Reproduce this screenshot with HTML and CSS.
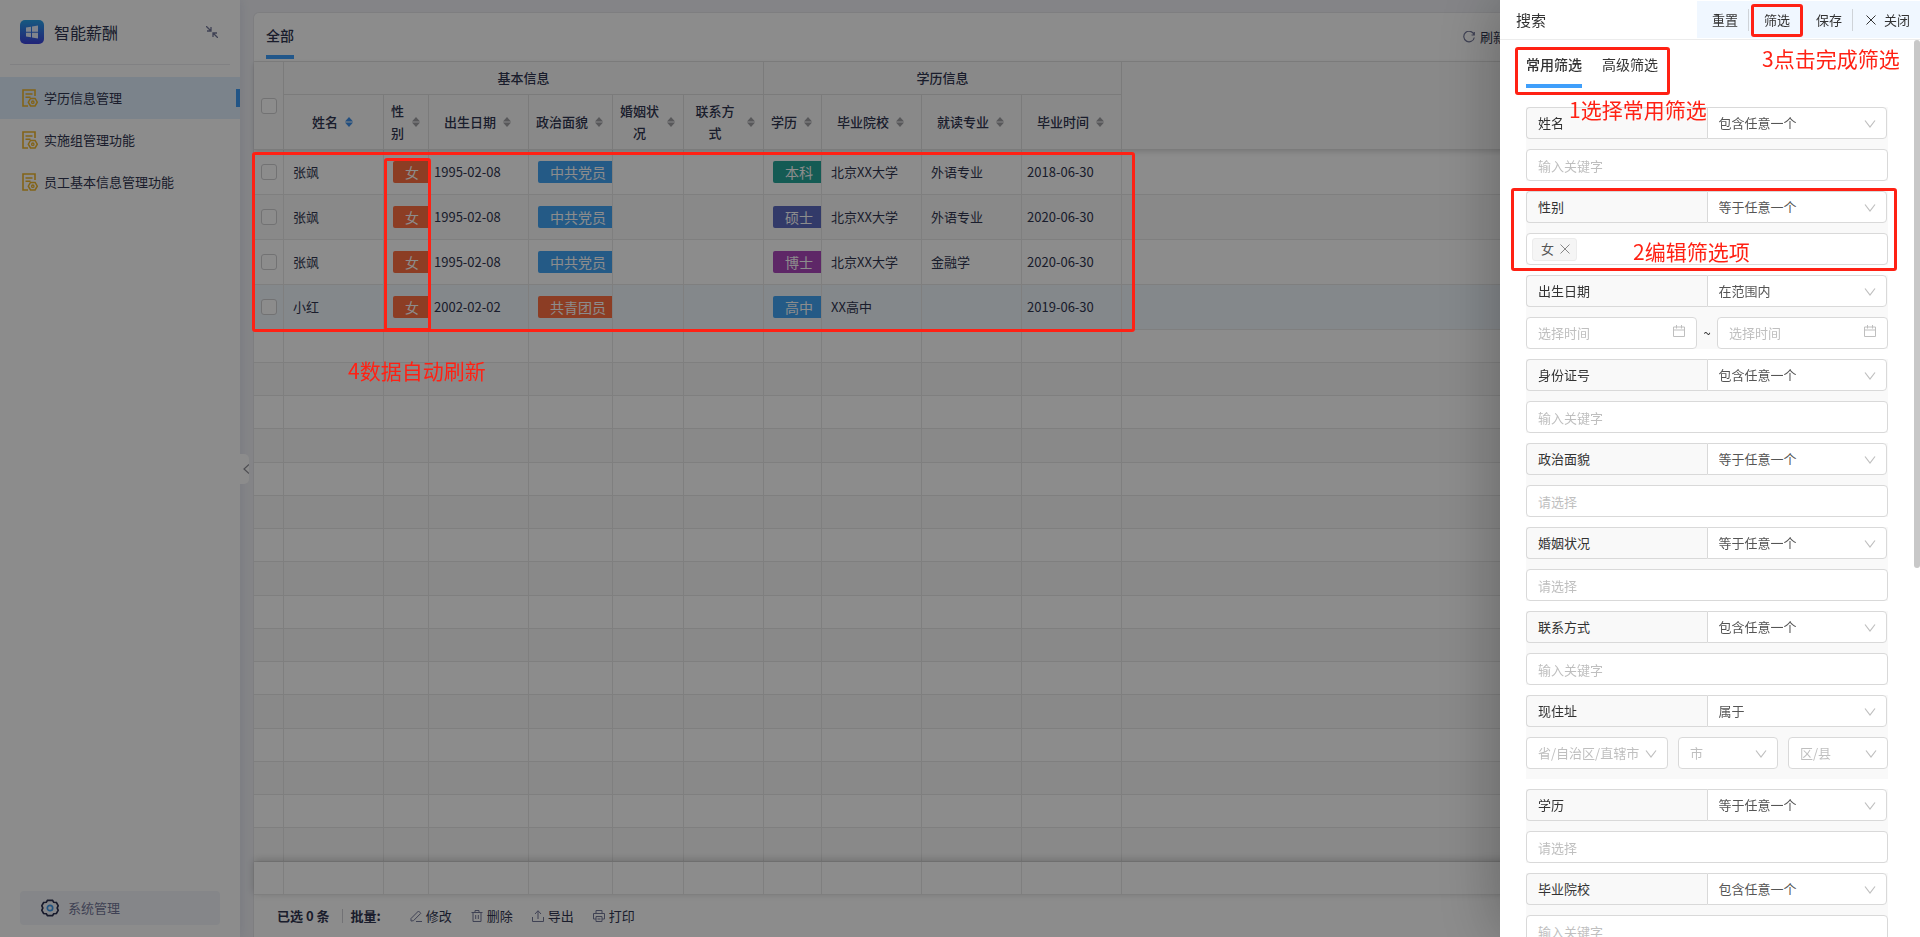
FILE: index.html
```html
<!DOCTYPE html>
<html lang="zh-CN">
<head>
<meta charset="utf-8">
<title>智能薪酬</title>
<link rel="stylesheet" href="styles.css">
</head>
<body>
<svg class="sprite" aria-hidden="true">
  <symbol id="i-doc" viewBox="0 0 16 18"><path d="M13 7V1H1v16h5M3.500 5h7M3.500 8.200h5" fill="none" stroke="currentColor" stroke-width="1.600"/><path d="M8.500 9.400h4.600l2.200 3.800-2.200 3.800H8.500l-2.200-3.800z" fill="none" stroke="currentColor" stroke-width="1.500"/><circle cx="10.800" cy="13.200" r="1.200" fill="none" stroke="currentColor" stroke-width="1.300"/></symbol>
  <symbol id="i-sort" viewBox="0 0 8 10"><path class="up" d="M4 0l4 4.500H0z"/><path class="down" d="M4 10l4-4.500H0z"/></symbol>
  <symbol id="i-down" viewBox="0 0 12 8"><path d="M1 .5l5 6.500 5-6.500" fill="none" stroke="currentColor" stroke-width="1.200"/></symbol>
  <symbol id="i-close" viewBox="0 0 10 10"><path d="M.5.5l9 9m0-9l-9 9" fill="none" stroke="currentColor" stroke-width="1"/></symbol>
  <symbol id="i-cal" viewBox="0 0 12 12"><path d="M.5 2h11v9.500H.5zM.5 5h11M3.500 0v3.500M8.500 0v3.500" fill="none" stroke="currentColor"/></symbol>
</svg>

<div class="app">
  <aside class="sidebar">
    <header class="brand">
      <svg class="logo" viewBox="0 0 24 24"><defs><linearGradient id="lg" x1="0" y1="0" x2="0" y2="1"><stop offset="0" stop-color="#29a3ea"/><stop offset="1" stop-color="#3d42dc"/></linearGradient></defs><rect width="24" height="24" rx="5" fill="url(#lg)"/><path d="M6 7.600l5-.8v4.900H6zM12 6.600l6-1v6.100h-6zM6 12.700h5v4.600l-5-.8zM12 12.700h6v5.800l-6-1z" fill="#e8f1ff"/></svg>
      <h1>智能薪酬</h1>
      <button class="collapse" aria-label="收起"><svg viewBox="0 0 12 12"><path d="M0 0l4.500 4.500M5 1v4H1M12 12L7.500 7.500M11 7H7v4" fill="none" stroke="currentColor" stroke-width="1.300"/></svg></button>
    </header>
    <nav class="menu">
      <a class="active" href="#"><svg><use href="#i-doc"/></svg>学历信息管理</a>
      <a href="#"><svg><use href="#i-doc"/></svg>实施组管理功能</a>
      <a href="#"><svg><use href="#i-doc"/></svg>员工基本信息管理功能</a>
    </nav>
    <button class="system">
      <svg viewBox="0 0 18 18"><path d="M6.500 1.300h5l1.200 2 2.700.2 1.800 3.200-1 2.300 1 2.300-1.800 3.200-2.700.2-1.200 2h-5l-1.200-2-2.700-.2L.8 11.300l1-2.300-1-2.300 1.800-3.200 2.700-.2z" fill="none" stroke="#2b3050" stroke-width="1.700"/><circle cx="9" cy="9" r="2.700" fill="none" stroke="#3f9bef" stroke-width="1.700"/></svg>
      系统管理
    </button>
    <button class="handle" aria-label="折叠侧栏"><svg viewBox="0 0 6 10"><path d="M6 .5L1 5l5 4.500" fill="none" stroke="currentColor" stroke-width="1.200"/></svg></button>
  </aside>

  <main class="card">
    <header class="card-head">
      <button class="tab on">全部</button>
      <button class="refresh"><svg viewBox="0 0 12 12"><path d="M11 3.500A5.300 5.300 0 1 0 11.300 6.500M11.300 1v3H8.500" fill="none" stroke="currentColor" stroke-width="1.200"/></svg>刷新</button>
    </header>

    <table class="grid">
      <colgroup><col class="w-check"><col class="w-100"><col class="w-sex"><col class="w-100"><col class="w-party"><col class="w-marry"><col class="w-phone"><col class="w-edu"><col class="w-100"><col class="w-100"><col class="w-100"><col></colgroup>
      <thead>
        <tr class="groups"><th rowspan="2"><input type="checkbox" aria-label="全选"></th><th colspan="6">基本信息</th><th colspan="4">学历信息</th><th rowspan="2" class="rest"></th></tr>
        <tr class="names">
          <th><div><span>姓名</span><svg class="sort desc"><use href="#i-sort"/></svg></div></th>
          <th><div><span>性别</span><svg class="sort"><use href="#i-sort"/></svg></div></th>
          <th><div><span>出生日期</span><svg class="sort"><use href="#i-sort"/></svg></div></th>
          <th><div><span>政治面貌</span><svg class="sort"><use href="#i-sort"/></svg></div></th>
          <th><div><span>婚姻状况</span><svg class="sort"><use href="#i-sort"/></svg></div></th>
          <th><div><span>联系方式</span><svg class="sort"><use href="#i-sort"/></svg></div></th>
          <th><div><span>学历</span><svg class="sort"><use href="#i-sort"/></svg></div></th>
          <th><div><span>毕业院校</span><svg class="sort"><use href="#i-sort"/></svg></div></th>
          <th><div><span>就读专业</span><svg class="sort"><use href="#i-sort"/></svg></div></th>
          <th><div><span>毕业时间</span><svg class="sort"><use href="#i-sort"/></svg></div></th>
        </tr>
      </thead>
      <tbody class="data">
        <tr><td class="check"><input type="checkbox" aria-label="选择"></td><td>张飒</td><td><span class="tag orange">女</span></td><td class="date">1995-02-08</td><td><span class="tag blue">中共党员</span></td><td></td><td></td><td><span class="tag teal">本科</span></td><td>北京XX大学</td><td>外语专业</td><td class="date">2018-06-30</td><td></td></tr>
        <tr><td class="check"><input type="checkbox" aria-label="选择"></td><td>张飒</td><td><span class="tag orange">女</span></td><td class="date">1995-02-08</td><td><span class="tag blue">中共党员</span></td><td></td><td></td><td><span class="tag indigo">硕士</span></td><td>北京XX大学</td><td>外语专业</td><td class="date">2020-06-30</td><td></td></tr>
        <tr><td class="check"><input type="checkbox" aria-label="选择"></td><td>张飒</td><td><span class="tag orange">女</span></td><td class="date">1995-02-08</td><td><span class="tag blue">中共党员</span></td><td></td><td></td><td><span class="tag purple">博士</span></td><td>北京XX大学</td><td>金融学</td><td class="date">2020-06-30</td><td></td></tr>
        <tr class="hover"><td class="check"><input type="checkbox" aria-label="选择"></td><td>小红</td><td><span class="tag orange">女</span></td><td class="date">2002-02-02</td><td><span class="tag orange">共青团员</span></td><td></td><td></td><td><span class="tag blue">高中</span></td><td>XX高中</td><td></td><td class="date">2019-06-30</td><td></td></tr>
      </tbody>
      <tbody class="filler" id="filler"></tbody>
      <tfoot><tr><td></td><td></td><td></td><td></td><td></td><td></td><td></td><td></td><td></td><td></td><td></td><td></td></tr></tfoot>
    </table>

    <footer class="bulk">
      <strong class="count">已选 0 条</strong>
      <strong class="label">批量:</strong>
      <button><svg viewBox="0 0 12 12"><path d="M1 8.500L8.500 1l2.300 2.300L3.500 10.700 1 11zM6 11.500h6" fill="none" stroke="currentColor"/></svg>修改</button>
      <button><svg viewBox="0 0 12 12"><path d="M.5 2.500h11M4 2.500v-2h4v2M2 2.500v9h8v-9M4.700 5v4M7.300 5v4" fill="none" stroke="currentColor"/></svg>删除</button>
      <button><svg viewBox="0 0 12 12"><path d="M6 9V1M3 4l3-3.300L9 4M.5 7v4.500h11V7" fill="none" stroke="currentColor"/></svg>导出</button>
      <button><svg viewBox="0 0 12 12"><path d="M3 3.500v-3h6v3M3 9H.5V3.500h11V9H9M3 6.500h6v5H3zM4.500 9h3" fill="none" stroke="currentColor"/></svg>打印</button>
    </footer>
  </main>
</div>

<div class="mask"></div>

<section class="drawer" aria-label="搜索">
  <header class="drawer-head">
    <h2>搜索</h2>
    <div class="actions">
      <button class="reset">重置</button><i></i><button class="apply">筛选</button><button class="save">保存</button><i></i><button class="close"><svg><use href="#i-close"/></svg>关闭</button>
    </div>
  </header>
  <div class="drawer-body">
    <div class="tabs"><button class="tab on">常用筛选</button><button class="tab">高级筛选</button></div>
    <form class="fields">
      <div class="field">
        <div class="cond"><label for="f1">姓名</label><div class="pick"><select aria-label="姓名条件"><option>包含任意一个</option></select><svg><use href="#i-down"/></svg></div></div>
        <input id="f1" class="box" placeholder="输入关键字">
      </div>
      <div class="field">
        <div class="cond"><label for="f2">性别</label><div class="pick"><select aria-label="性别条件"><option>等于任意一个</option></select><svg><use href="#i-down"/></svg></div></div>
        <div class="box chips"><span class="chip">女<button type="button" aria-label="移除"><svg><use href="#i-close"/></svg></button></span><input id="f2"></div>
      </div>
      <div class="field">
        <div class="cond"><label for="f3">出生日期</label><div class="pick"><select aria-label="出生日期条件"><option>在范围内</option></select><svg><use href="#i-down"/></svg></div></div>
        <div class="range"><div class="pick cal"><input id="f3" class="box" placeholder="选择时间"><svg><use href="#i-cal"/></svg></div><span>~</span><div class="pick cal"><input class="box" aria-label="结束时间" placeholder="选择时间"><svg><use href="#i-cal"/></svg></div></div>
      </div>
      <div class="field">
        <div class="cond"><label for="f4">身份证号</label><div class="pick"><select aria-label="身份证号条件"><option>包含任意一个</option></select><svg><use href="#i-down"/></svg></div></div>
        <input id="f4" class="box" placeholder="输入关键字">
      </div>
      <div class="field">
        <div class="cond"><label for="f5">政治面貌</label><div class="pick"><select aria-label="政治面貌条件"><option>等于任意一个</option></select><svg><use href="#i-down"/></svg></div></div>
        <input id="f5" class="box" placeholder="请选择">
      </div>
      <div class="field">
        <div class="cond"><label for="f6">婚姻状况</label><div class="pick"><select aria-label="婚姻状况条件"><option>等于任意一个</option></select><svg><use href="#i-down"/></svg></div></div>
        <input id="f6" class="box" placeholder="请选择">
      </div>
      <div class="field">
        <div class="cond"><label for="f7">联系方式</label><div class="pick"><select aria-label="联系方式条件"><option>包含任意一个</option></select><svg><use href="#i-down"/></svg></div></div>
        <input id="f7" class="box" placeholder="输入关键字">
      </div>
      <div class="field address">
        <div class="cond"><label for="f8">现住址</label><div class="pick"><select aria-label="现住址条件"><option>属于</option></select><svg><use href="#i-down"/></svg></div></div>
        <div class="places">
          <div class="pick"><select id="f8" class="box"><option>省/自治区/直辖市</option></select><svg><use href="#i-down"/></svg></div>
          <div class="pick"><select class="box" aria-label="市"><option>市</option></select><svg><use href="#i-down"/></svg></div>
          <div class="pick"><select class="box" aria-label="区县"><option>区/县</option></select><svg><use href="#i-down"/></svg></div>
        </div>
      </div>
      <div class="field">
        <div class="cond"><label for="f9">学历</label><div class="pick"><select aria-label="学历条件"><option>等于任意一个</option></select><svg><use href="#i-down"/></svg></div></div>
        <input id="f9" class="box" placeholder="请选择">
      </div>
      <div class="field">
        <div class="cond"><label for="f10">毕业院校</label><div class="pick"><select aria-label="毕业院校条件"><option>包含任意一个</option></select><svg><use href="#i-down"/></svg></div></div>
        <input id="f10" class="box" placeholder="输入关键字">
      </div>
    </form>
  </div>
  <div class="thumb"></div>
</section>

<div class="notes left">
  <div class="frame rows"></div>
  <div class="frame sex"></div>
  <p class="note n4">4数据自动刷新</p>
</div>
<div class="notes right">
  <div class="frame apply-frame"></div>
  <div class="frame tabs-frame"></div>
  <div class="frame sex-frame"></div>
  <p class="note n1">1选择常用筛选</p>
  <p class="note n2">2编辑筛选项</p>
  <p class="note n3">3点击完成筛选</p>
</div>
<script src="script.js"></script>
</body>
</html>
```
FILE: script.js
```js
// Empty rows keep the grid lines running down to the summary row.
const filler = document.getElementById('filler');
for (let r = 0; r < 16; r++) {
  const row = filler.insertRow();
  for (let c = 0; c < 12; c++) row.insertCell();
}
```
FILE: styles.css
```css
* { box-sizing: border-box; }
body {
  margin: 0;
  height: 100vh;
  overflow: hidden;
  background: #f0f1f6;
  color: #303550;
  font: 13px/20px "Noto Sans CJK SC", "Noto Sans", sans-serif;
}
button {
  border: 0;
  padding: 0;
  background: none;
  color: inherit;
  font: inherit;
  white-space: nowrap;
}
a { color: inherit; text-decoration: none; }
h1, h2, p { margin: 0; font-weight: 400; }
.sprite { position: absolute; width: 0; height: 0; }

.app { display: flex; height: 100vh; isolation: isolate; }

/* Sidebar */
.sidebar {
  position: relative;
  flex: 0 0 240px;
  display: flex;
  flex-direction: column;
  background: #fff;
  box-shadow: 0 0 10px rgba(60, 80, 140, .12);
}
.brand {
  display: flex;
  align-items: center;
  gap: 10px;
  height: 65px;
  margin: 0 10px 12px;
  padding: 0 12px 0 10px;
  border-bottom: 1px solid #ebebee;
}
.brand h1 { flex: 1; font-size: 16px; line-height: 24px; }
.logo { width: 24px; height: 24px; }
.collapse { display: flex; color: #74789a; }
.collapse svg { width: 12px; height: 12px; }
.menu a {
  display: flex;
  align-items: center;
  gap: 6px;
  height: 42px;
  padding-left: 22px;
}
.menu svg { width: 16px; height: 18px; color: #efb62c; }
.menu .active {
  background: linear-gradient(#3e9bf5, #3e9bf5) right center / 4px 18px no-repeat, #e1effd;
}
.system {
  display: flex;
  align-items: center;
  gap: 9px;
  height: 34px;
  margin: auto 20px 12px;
  padding-left: 21px;
  border-radius: 4px;
  background: #f3f5f9;
  color: #73779a;
}
.system svg { width: 18px; height: 18px; }
.handle {
  position: absolute;
  left: 100%;
  top: 454px;
  width: 9px;
  height: 30px;
  border-radius: 0 5px 5px 0;
  background: #fff;
  color: #8e8e96;
  display: flex;
  align-items: center;
  justify-content: flex-end;
}
.handle svg { width: 6px; height: 10px; }

/* Main card */
.card {
  flex: 1;
  min-width: 0;
  display: flex;
  flex-direction: column;
  margin: 12px 13px 0;
  border: 1px solid #e6e6ea;
  border-bottom: 0;
  border-radius: 6px 6px 0 0;
  background: #fff;
}
.card-head {
  display: flex;
  justify-content: space-between;
  height: 49px;
  padding: 0 400px 0 12px;
  border-bottom: 1px solid #e6e6e6;
}
.tab {
  height: 46px;
  padding-top: 2px;
  border-bottom: 4px solid transparent;
  font-size: 14px;
}
.tab.on { border-color: #3f9ffb; font-weight: 500; }
.refresh { display: flex; align-items: center; gap: 5px; }
.refresh svg { width: 12px; height: 12px; color: #74789a; }

/* Data grid */
.grid {
  width: 100%;
  table-layout: fixed;
  border-collapse: separate;
  border-spacing: 0;
}
.w-check { width: 30px; }
.w-100 { width: 100px; }
.w-sex { width: 45px; }
.w-party { width: 84px; }
.w-marry { width: 71px; }
.w-phone { width: 80px; }
.w-edu { width: 58px; }
.grid th, .grid td {
  padding: 0;
  border: solid #e8e8e8;
  border-width: 0 1px 1px 0;
  overflow: hidden;
  white-space: nowrap;
}
.grid th {
  background: #fafafa;
  border-color: #e0e0e0;
  font-weight: 500;
  line-height: 22px;
}
.grid th.rest, .grid td:last-child { border-right-color: transparent; }
.groups { height: 33px; }
.names { height: 55px; }
.names div {
  display: flex;
  align-items: center;
  justify-content: center;
  gap: 7px;
  padding: 0 8px 0 6px;
  white-space: normal;
}
.sort { flex: none; width: 8px; height: 10px; fill: #a0a0a4; }
.sort.desc { fill: #3e8fe8; }
.grid thead, .grid tfoot { position: relative; z-index: 1; }
.grid thead { box-shadow: 0 2px 5px rgba(0, 0, 0, .14); }
.grid tfoot { box-shadow: 0 -2px 8px rgba(0, 0, 0, .2); }
.grid input {
  appearance: none;
  display: block;
  width: 16px;
  height: 16px;
  margin: 0 auto;
  border: 1px solid #cfcfd2;
  border-radius: 3px;
  background: #fff;
}
.data tr { height: 45px; }
.data td { padding-left: 9px; }
.data .check { padding-left: 0; }
.data .date { padding-left: 5px; }
.data tr:nth-child(even), .filler tr:nth-child(even) { background: #fafafa; }
.data tr.hover { background: #f0f7fd; }
.filler tr { height: 33px; }
.filler tr:nth-child(4n) { height: 34px; }
.grid tfoot tr { height: 33px; background: #fff; }
.tag {
  display: inline-block;
  vertical-align: middle;
  padding: 0 12px;
  border-radius: 2px;
  color: #fff;
  font-size: 14px;
  line-height: 22px;
}
.orange { background: #ff7043; }
.blue { background: #42a5f5; }
.teal { background: #26a69a; }
.indigo { background: #5c6bc0; }
.purple { background: #ab47bc; }

.bulk {
  flex: 1;
  display: flex;
  align-items: center;
  gap: 19px;
  padding-left: 23px;
}
.bulk strong { font-weight: 700; }
.count {
  margin-right: -11px;
  padding-right: 12px;
  border-right: 1px solid #d0d0d6;
  line-height: 14px;
}
.label { margin-right: 10px; }
.bulk button { display: flex; align-items: center; gap: 4px; }
.bulk svg { width: 12px; height: 12px; color: #74789a; }

.mask { position: fixed; inset: 0; background: rgba(0, 0, 0, .45); }

/* Search drawer */
.drawer {
  position: fixed;
  inset: 0 0 0 auto;
  width: 420px;
  display: flex;
  flex-direction: column;
  background: #fff;
  color: #333;
  box-shadow: 0 0 60px rgba(0, 0, 0, .3);
}
.drawer-head {
  flex: none;
  display: flex;
  justify-content: space-between;
  height: 40px;
  padding: 1px 0 1px 16px;
  border-bottom: 1px solid #ececec;
}
.drawer-head h2 { font-size: 15px; line-height: 38px; }
.actions { display: flex; align-items: center; background: #f0f7ff; }
.actions i { width: 1px; height: 22px; background: #cfd3d8; }
.actions button { height: 37px; }
.actions .reset { padding: 0 10px 0 15px; }
.actions .apply { padding: 0 13px 0 15px; }
.actions .save { padding: 0 10px 0 13px; }
.actions .close { display: flex; align-items: center; gap: 8px; padding: 0 10px 0 13px; }
.close svg { width: 10px; height: 10px; }
.drawer-body {
  flex: 1;
  min-height: 0;
  overflow-y: auto;
  scrollbar-width: none;
  padding: 0 32px 0 26px;
}
.tabs { display: flex; gap: 20px; padding-top: 2px; }
.fields { display: grid; gap: 10px; padding-top: 19px; }
.field { display: grid; gap: 10px; background: #f9f9f9; }
.address { padding-bottom: 10px; }
.cond { display: grid; grid-template-columns: 1fr 1fr; margin-right: 1px; }
.cond label {
  height: 32px;
  padding-left: 11px;
  border: 1px solid #d9d9d9;
  border-right: 0;
  border-radius: 4px 0 0 4px;
  line-height: 30px;
}
.pick { position: relative; }
.pick svg {
  position: absolute;
  right: 11px;
  top: 13px;
  width: 12px;
  height: 8px;
  color: #bfbfbf;
  pointer-events: none;
}
.pick.cal svg { top: 8px; right: 12px; height: 12px; }
.pick select, .box {
  appearance: none;
  display: block;
  width: 100%;
  height: 32px;
  margin: 0;
  padding: 0 11px;
  border: 1px solid #d9d9d9;
  border-radius: 4px;
  background: #fff;
  color: #555;
  font: inherit;
  outline: 0;
}
.cond select { border-radius: 0 4px 4px 0; }
.box::placeholder { color: #bfbfbf; opacity: 1; }
.places .box { color: #bfbfbf; }
.range { display: grid; grid-template-columns: 1fr 20px 1fr; text-align: center; line-height: 32px; }
.places { display: grid; grid-template-columns: 142px 1fr 1fr; gap: 10px; }
.chips.box { display: flex; align-items: center; gap: 4px; padding: 0 5px; }
.chips input { flex: 1; min-width: 0; border: 0; outline: 0; }
.chip {
  display: flex;
  align-items: center;
  gap: 6px;
  height: 23px;
  padding: 0 6px 0 8px;
  border: 1px solid #ececec;
  border-radius: 3px;
  background: #f5f5f5;
}
.chip svg { display: block; width: 10px; height: 10px; color: #888; }
.thumb {
  position: absolute;
  right: 0;
  top: 40px;
  width: 6px;
  height: 528px;
  border-radius: 3px;
  background: #c8c8c8;
}

/* Step annotations drawn over the screen */
.notes { position: fixed; top: 0; pointer-events: none; color: #ff2114; }
.notes.left { left: 0; }
.notes.right { right: 420px; }
.frame { position: absolute; border: 3px solid; border-radius: 3px; }
.rows { left: 252px; top: 152px; width: 883px; height: 180px; }
.sex { left: 384px; top: 158px; width: 47px; height: 173px; }
.apply-frame { left: 251px; top: 4px; width: 52px; height: 33px; }
.tabs-frame { left: 15px; top: 47px; width: 155px; height: 48px; }
.sex-frame { left: 11px; top: 188px; width: 386px; height: 83px; }
.note { position: absolute; font-size: 21px; line-height: 30px; white-space: nowrap; }
.n1 { left: 69px; top: 94px; }
.n2 { left: 133px; top: 236px; }
.n3 { left: 262px; top: 43px; }
.n4 { left: 348px; top: 355px; }
```
